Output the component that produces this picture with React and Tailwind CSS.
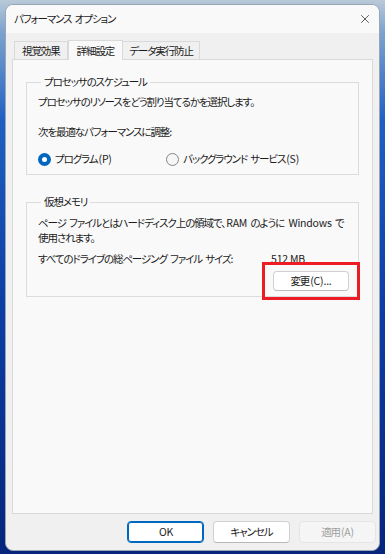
import { X } from "lucide-react";

const font = { fontFamily: '"Noto Sans CJK JP", "Noto Sans", sans-serif' };

// latin runs keep near-normal spacing, Japanese text is squeezed to match Yu Gothic UI widths
const L = ({ children }) => <span className="inline-block ml-[1px] tracking-[-0.2px] [word-spacing:0px]">{children}</span>;

function Radio({ checked, label, className = "" }) {
  return (
    <label className={`flex items-center gap-[4px] ${className}`}>
      {checked ? (
        <span className="w-[13px] h-[13px] rounded-full bg-[#0067c0] flex items-center justify-center">
          <span className="w-[5px] h-[5px] rounded-full bg-white" />
        </span>
      ) : (
        <span className="w-[13px] h-[13px] rounded-full border border-[#858585] bg-[#f6f6f6]" />
      )}
      <span>{label}</span>
    </label>
  );
}

function Btn({ children, primary, disabled }) {
  return (
    <button
      className={`w-[77px] h-[22px] rounded-[4px] flex items-center justify-center ${
        primary
          ? "bg-white border border-[#0067c0] shadow-[inset_0_0_0_1px_#0067c0]"
          : disabled
          ? "bg-[#f5f5f5] border border-[#e5e5e5] text-[#a0a0a0]"
          : "bg-white border border-[#d0d0d0] border-b-[#b8b8b8]"
      }`}
    >
      {children}
    </button>
  );
}

export default function App() {
  return (
    <div
      style={font}
      className="w-[385px] h-[554px] pt-[4px] pl-[5px] pr-[5px] pb-[3px] bg-[linear-gradient(180deg,#b9c9d8_0px,#7fa5cf_30px,#1f5fc4_120px,#0c3ea8_300px,#06267c_554px)] text-[10.5px] tracking-[-1.1px] [word-spacing:2px] text-[#1b1b1b] [font-feature-settings:'palt']"
    >
      <div className="h-full rounded-[8px] bg-[#f0f0f0] border border-[#9aa6b2] overflow-hidden flex flex-col">
        {/* title bar */}
        <div className="h-[28px] bg-[#f9f9f9] flex items-center justify-between pl-[8px] pr-[7px]">
          <span>パフォーマンス オプション</span>
          <X className="w-[14px] h-[14px] text-[#2b2b2b]" strokeWidth={1.3} />
        </div>

        <div className="flex-1 px-[6px] pt-[6px] flex flex-col">
          {/* tabs */}
          <div className="flex items-end pl-[2px] h-[20px]">
            <div className="h-[18px] px-[7px] border border-b-0 border-[#d9d9d9] bg-[#f0f0f0] flex items-center">視覚効果</div>
            <div className="h-[20px] px-[8px] border border-b-0 border-[#d9d9d9] bg-[#f9f9f9] flex items-center -mb-px relative z-10">詳細設定</div>
            <div className="h-[18px] px-[6px] border border-b-0 border-l-0 border-[#d9d9d9] bg-[#f0f0f0] flex items-center">データ実行防止</div>
          </div>

          {/* panel */}
          <div className="h-[455px] bg-[#f9f9f9] border border-[#d9d9d9] px-[13px] pt-[14px]">
            <fieldset className="border border-[#dcdcdc] h-[101px] px-[11px] pt-[4px]">
              <legend className="px-[3px] ml-[3px] leading-[16px]">プロセッサのスケジュール</legend>
              <p className="leading-[16px]">プロセッサのリソースをどう割り当てるかを選択します。</p>
              <p className="leading-[16px] mt-[14px]">次を最適なパフォーマンスに調整:</p>
              <div className="flex mt-[11px] leading-[16px]">
                <Radio checked label={<>プログラム<L>(P)</L></>} className="w-[128px]" />
                <Radio label={<>バックグラウンド サービス<L>(S)</L></>} />
              </div>
            </fieldset>

            <fieldset className="mt-[19px] border border-[#dcdcdc] h-[103px] px-[11px] pt-[5px] relative">
              <legend className="px-[3px] ml-[3px] leading-[16px]">仮想メモリ</legend>
              <p className="leading-[15px]">
                ページ ファイルとはハードディスク上の領域で、<L>RAM</L> のように <L>Windows</L> で使用されます。
              </p>
              <div className="flex mt-[6px] leading-[16px]">
                <span className="w-[232px]">すべてのドライブの総ページング ファイル サイズ:</span>
                <L>512 MB</L>
              </div>
              <div className="absolute right-[-2px] top-[52px] w-[98px] h-[38px] border-[3px] border-[#ed1c24] flex items-center justify-center">
                <div className="w-[76px] h-[20px] rounded-[4px] bg-white border border-[#d0d0d0] border-b-[#bcbcbc] flex items-center justify-center">
                  変更<L>(C)...</L>
                </div>
              </div>
            </fieldset>
          </div>

          {/* footer buttons */}
          <div className="flex justify-end gap-[9px] pt-[7px] mr-[-3px]">
            <Btn primary><L>OK</L></Btn>
            <Btn>キャンセル</Btn>
            <Btn disabled>適用<L>(A)</L></Btn>
          </div>
        </div>
      </div>
    </div>
  );
}
